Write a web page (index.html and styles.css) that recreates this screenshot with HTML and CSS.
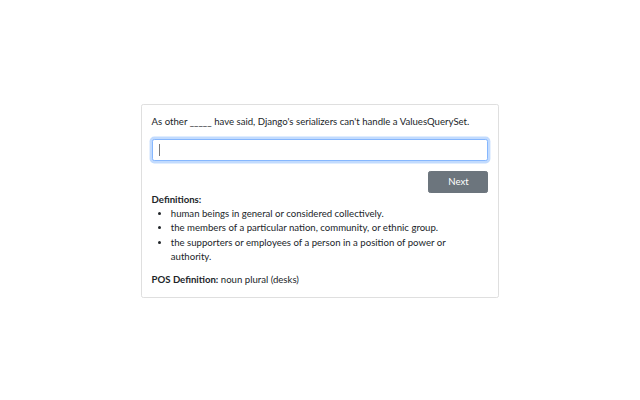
FILE: index.html
```html
<!DOCTYPE html>
<html lang="en">
<head>
<meta charset="utf-8">
<title>Quiz</title>
<link rel="stylesheet" href="styles.css">
</head>
<body>
<main class="page">
  <section class="card">
    <p class="sentence">As other _____ have said, Django's serializers can't handle a ValuesQuerySet.</p>
    <div class="field">
      <input class="answer" type="text">
      <span class="caret"></span>
    </div>
    <div class="actions"><button class="btn" type="button">Next</button></div>
    <div class="label">Definitions:</div>
    <ul class="defs">
      <li>human beings in general or considered collectively.</li>
      <li>the members of a particular nation, community, or ethnic group.</li>
      <li>the supporters or employees of a person in a position of power or authority.</li>
    </ul>
    <p class="pos"><span class="label-inline">POS Definition:</span> noun plural (desks)</p>
  </section>
</main>
</body>
</html>
```
FILE: styles.css
```css
html, body {
  margin: 0;
  padding: 0;
  background: #fff;
}
body {
  font-family: "Lato", "Noto Sans", sans-serif;
  font-size: 9.6px;
  line-height: 1.5;
  color: #212529;
}
.page {
  display: flex;
  justify-content: center;
  padding-top: 104px;
}
.card {
  box-sizing: border-box;
  width: 358px;
  border: 1px solid #dfdfdf;
  border-radius: 2.25px;
  padding: 9.6px;
}
.sentence {
  margin: 0 0 9.6px;
}
.field {
  position: relative;
}
.answer {
  display: block;
  box-sizing: border-box;
  width: 100%;
  height: 22.8px;
  margin: 0;
  padding: 0 7.2px;
  font: inherit;
  color: #212529;
  border: 1px solid #86b7fe;
  border-radius: 2.25px;
  outline: none;
  box-shadow: 0 0 0 2.4px rgba(13, 110, 253, 0.25);
}
.caret {
  position: absolute;
  left: 7px;
  top: 5px;
  width: 1px;
  height: 12px;
  background: #7a7a7a;
}
.actions {
  display: flex;
  justify-content: flex-end;
  margin-top: 9.6px;
}
.btn {
  width: 60px;
  height: 21.6px;
  padding: 0;
  font: inherit;
  color: #fff;
  background: #6c757d;
  border: 1px solid #6c757d;
  border-radius: 2.25px;
}
.label, .label-inline {
  font-weight: 700;
}
.defs {
  margin: 0 0 8px;
  padding: 0 8px 0 19.2px;
}
.pos {
  margin: 0;
}
```
